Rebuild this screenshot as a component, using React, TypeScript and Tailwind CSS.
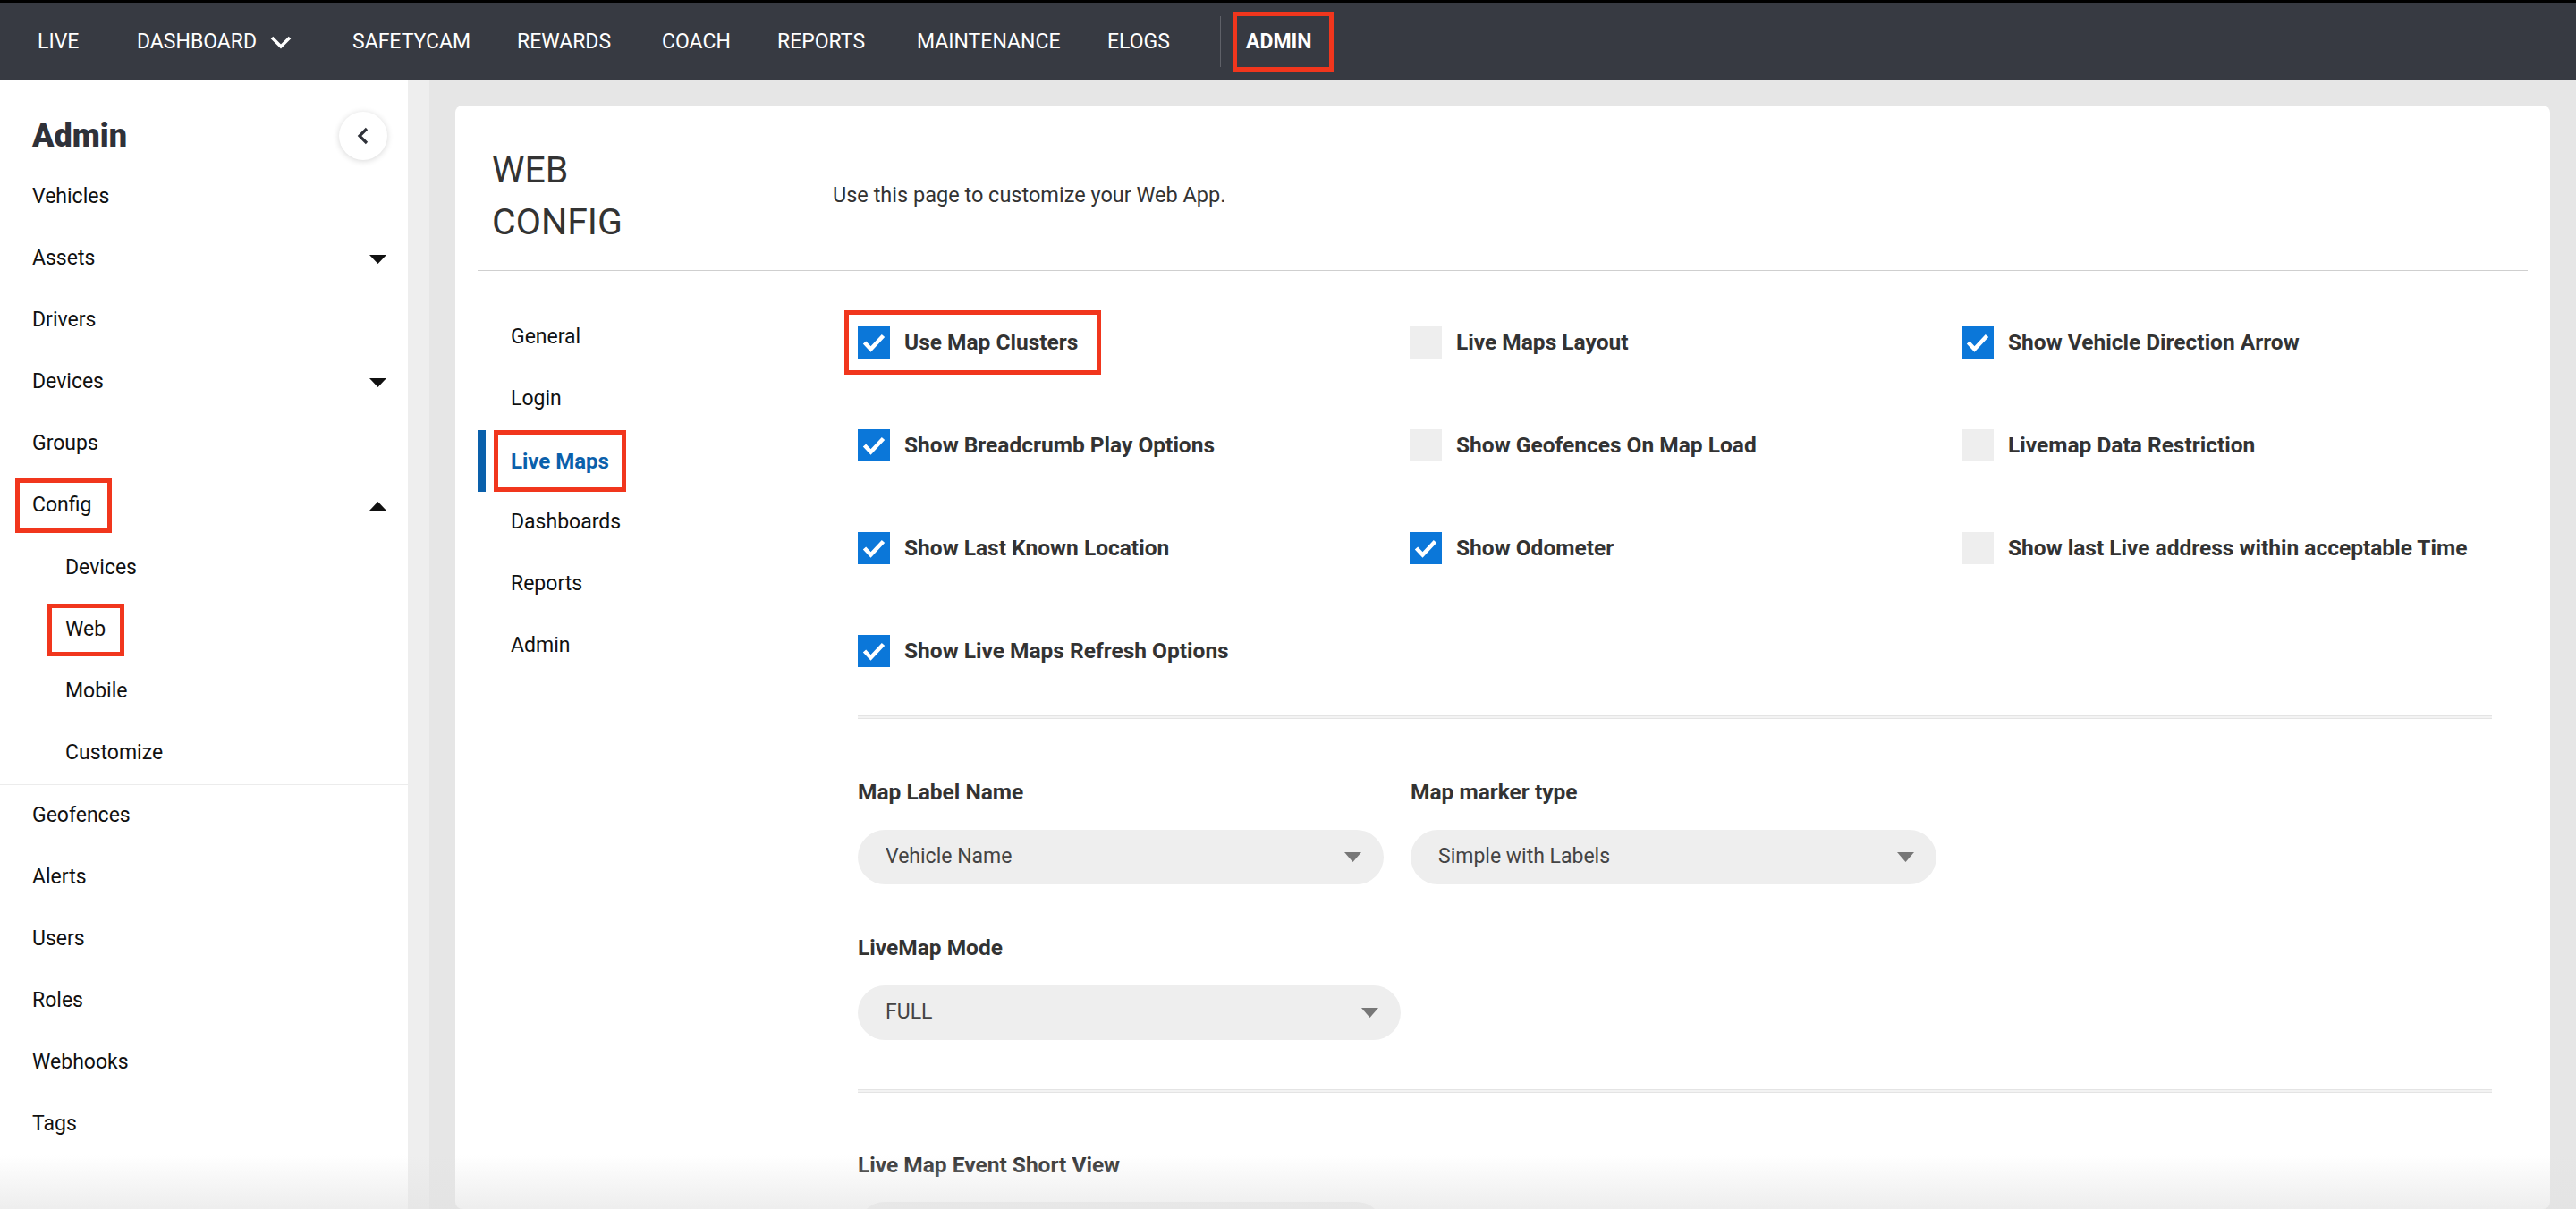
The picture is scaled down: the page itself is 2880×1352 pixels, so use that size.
import { Fragment } from "react";

const NAV = [
  { label: "LIVE", w: "w-[111px]" },
  { label: "DASHBOARD", w: "w-[241px]", caret: true },
  { label: "SAFETYCAM", w: "w-[184px]" },
  { label: "REWARDS", w: "w-[162px]" },
  { label: "COACH", w: "w-[129px]" },
  { label: "REPORTS", w: "w-[156px]" },
  { label: "MAINTENANCE", w: "w-[213px]" },
  { label: "ELOGS", w: "w-[126px]" },
];

const MENU_TOP = [
  { label: "Vehicles" },
  { label: "Assets", caret: "down" },
  { label: "Drivers" },
  { label: "Devices", caret: "down" },
  { label: "Groups" },
];

const CONFIG_SUB = ["Devices", "Web", "Mobile", "Customize"];
const MENU_BOTTOM = ["Geofences", "Alerts", "Users", "Roles", "Webhooks", "Tags"];

const TABS = ["General", "Login", "Live Maps", "Dashboards", "Reports", "Admin"];

const OPTIONS: { label: string; on: boolean; marked?: boolean }[] = [
  { label: "Use Map Clusters", on: true, marked: true },
  { label: "Live Maps Layout", on: false },
  { label: "Show Vehicle Direction Arrow", on: true },
  { label: "Show Breadcrumb Play Options", on: true },
  { label: "Show Geofences On Map Load", on: false },
  { label: "Livemap Data Restriction", on: false },
  { label: "Show Last Known Location", on: true },
  { label: "Show Odometer", on: true },
  { label: "Show last Live address within acceptable Time", on: false },
  { label: "Show Live Maps Refresh Options", on: true },
];

function Caret({ up }: { up?: boolean }) {
  return (
    <svg width="19" height="10" viewBox="0 0 19 10" className="shrink-0">
      {up ? <polygon points="0,10 19,10 9.5,0" fill="#111" /> : <polygon points="0,0 19,0 9.5,10" fill="#111" />}
    </svg>
  );
}

function Checkbox({ on }: { on: boolean }) {
  return (
    <span className={`flex h-[36px] w-[36px] shrink-0 items-center justify-center ${on ? "bg-[#0b77d9]" : "bg-[#eeeeee]"}`}>
      {on && (
        <svg width="36" height="36" viewBox="0 0 36 36">
          <polyline points="7.5,18 14.5,25.5 28.5,10.5" fill="none" stroke="#fff" strokeWidth="4.6" />
        </svg>
      )}
    </span>
  );
}

function Select({ value, w }: { value: string; w: string }) {
  return (
    <div className={`flex h-[61px] ${w} items-center justify-between rounded-full bg-[#eeeeee] pl-[31px] pr-[25px]`}>
      <span className="text-[23px] text-[#444]">{value}</span>
      <svg width="19" height="11" viewBox="0 0 19 11">
        <polygon points="0,0 19,0 9.5,11" fill="#777" />
      </svg>
    </div>
  );
}

function Divider() {
  return <div className="h-[4px] border-y border-[#e4e4e4] bg-[#f3f3f3]" />;
}

export default function App() {
  return (
    <div className="relative flex h-[1352px] w-full flex-col overflow-hidden bg-[#e6e6e6] font-['Roboto','Liberation_Sans',sans-serif] text-[#111]">
      {/* top bar */}
      <header className="flex h-[89px] shrink-0 items-center border-t-[3px] border-black bg-[#373a42] pl-[42px] text-[23px] text-white">
        {NAV.map((n) => (
          <div key={n.label} className={`flex items-center pt-[2px] ${n.w}`}>
            <span>{n.label}</span>
            {n.caret && (
              <svg width="24" height="15" viewBox="0 0 24 15" className="ml-[15px]">
                <polyline points="2,2 12,12 22,2" fill="none" stroke="#fff" strokeWidth="3.6" />
              </svg>
            )}
          </div>
        ))}
        <div className="h-[57px] w-px bg-[#5f6168]" />
        <div className="ml-[13px] flex h-[67px] w-[113px] items-center border-[5px] border-[#f1361d] pl-[10px] pt-[2px] font-bold">
          ADMIN
        </div>
      </header>

      <div className="flex min-h-0 flex-1">
        {/* sidebar */}
        <aside className="w-[456px] shrink-0 bg-white pt-[29px] text-[23px]">
          <div className="flex h-[68px] items-center justify-between pl-[36px] pr-[23px]">
            <h1 className="text-[36px] font-black text-[#2f3139]">Admin</h1>
            <button className="flex h-[54px] w-[54px] items-center justify-center rounded-full bg-white shadow-[0_1px_7px_rgba(0,0,0,0.16)]">
              <svg width="14" height="22" viewBox="0 0 14 22">
                <polyline points="11,3 3,11 11,19" fill="none" stroke="#2f3139" strokeWidth="3.2" />
              </svg>
            </button>
          </div>
          {MENU_TOP.map((m) => (
            <div key={m.label} className="flex h-[69px] items-center justify-between pl-[36px] pr-[24px]">
              <span>{m.label}</span>
              {m.caret && <Caret />}
            </div>
          ))}
          <div className="flex h-[69px] items-center justify-between pl-[17px] pr-[24px]">
            <span className="flex h-[61px] items-center border-[5px] border-[#f1361d] pl-[14px] pr-[18px]">Config</span>
            <Caret up />
          </div>
          <div className="border-y border-[#ececec] bg-white">
            {CONFIG_SUB.map((s) =>
              s === "Web" ? (
                <div key={s} className="flex h-[69px] items-center pl-[53px]">
                  <span className="flex h-[59px] items-center border-[5px] border-[#f1361d] pl-[15px] pr-[16px]">Web</span>
                </div>
              ) : (
                <div key={s} className="flex h-[69px] items-center pl-[73px]">
                  {s}
                </div>
              ),
            )}
          </div>
          {MENU_BOTTOM.map((m) => (
            <div key={m} className="flex h-[69px] items-center pl-[36px]">
              {m}
            </div>
          ))}
        </aside>

        {/* main */}
        <main className="min-w-0 flex-1 border-l-[24px] border-[#eeeeee] pl-[29px] pr-[29px] pt-[29px]">
          <div className="h-full rounded-[8px] bg-white px-[25px] pt-[43px]">
            <div className="flex items-center border-b border-[#cfcfcf] pb-[25px] pl-[16px]">
              <h2 className="w-[381px] text-[41px] leading-[58px] text-[#333]">
                WEB
                <br />
                CONFIG
              </h2>
              <p className="text-[23.5px] text-[#333]">Use this page to customize your Web App.</p>
            </div>

            <div className="flex">
              {/* tabs */}
              <nav className="w-[425px] shrink-0 pt-[40px] text-[23px]">
                {TABS.map((t) =>
                  t === "Live Maps" ? (
                    <div key={t} className="flex h-[69px] items-stretch">
                      <span className="w-[9px] bg-[#0a60ab]" />
                      <span className="ml-[9px] flex items-center border-[5px] border-[#f1361d] pl-[14px] pr-[14px] text-[24px] font-bold text-[#0a60ab]">
                        Live Maps
                      </span>
                    </div>
                  ) : (
                    <div key={t} className="flex h-[69px] items-center pl-[37px]">
                      {t}
                    </div>
                  ),
                )}
              </nav>

              {/* options */}
              <section className="min-w-0 flex-1 pr-[40px] pt-[44px]">
                <div className="grid grid-cols-[617px_617px_1fr] gap-y-[43px]">
                  {OPTIONS.map((o) => (
                    <Fragment key={o.label}>
                      <div className="flex h-[72px] items-center">
                        {o.marked ? (
                          <div className="-ml-[15px] flex h-[72px] items-center gap-[16px] border-[5px] border-[#f1361d] pl-[10px] pr-[21px]">
                            <Checkbox on={o.on} />
                            <span className="text-[24.5px] font-bold text-[#333]">{o.label}</span>
                          </div>
                        ) : (
                          <div className="flex items-center gap-[16px]">
                            <Checkbox on={o.on} />
                            <span className="text-[24.5px] font-bold text-[#333]">{o.label}</span>
                          </div>
                        )}
                      </div>
                    </Fragment>
                  ))}
                </div>

                <div className="mt-[36px]">
                  <Divider />
                </div>

                <div className="mt-[68px] flex gap-[30px]">
                  <div>
                    <div className="text-[24.5px] font-bold leading-[28px] text-[#333]">Map Label Name</div>
                    <div className="mt-[28px]">
                      <Select value="Vehicle Name" w="w-[588px]" />
                    </div>
                  </div>
                  <div>
                    <div className="text-[24.5px] font-bold leading-[28px] text-[#333]">Map marker type</div>
                    <div className="mt-[28px]">
                      <Select value="Simple with Labels" w="w-[588px]" />
                    </div>
                  </div>
                </div>

                <div className="mt-[57px] text-[24.5px] font-bold leading-[28px] text-[#333]">LiveMap Mode</div>
                <div className="mt-[28px]">
                  <Select value="FULL" w="w-[607px]" />
                </div>

                <div className="mt-[55px]">
                  <Divider />
                </div>

                <div className="mt-[67px] text-[24.5px] font-bold leading-[28px] text-[#333]">Live Map Event Short View</div>
                <div className="mt-[27px]">
                  <Select value="" w="w-[588px]" />
                </div>
              </section>
            </div>
          </div>
        </main>
      </div>

      {/* screenshot fade at the bottom edge */}
      <div className="pointer-events-none absolute inset-x-0 bottom-0 h-[60px] bg-linear-to-b from-white/0 to-[#e2e2e2]/60" />
    </div>
  );
}
